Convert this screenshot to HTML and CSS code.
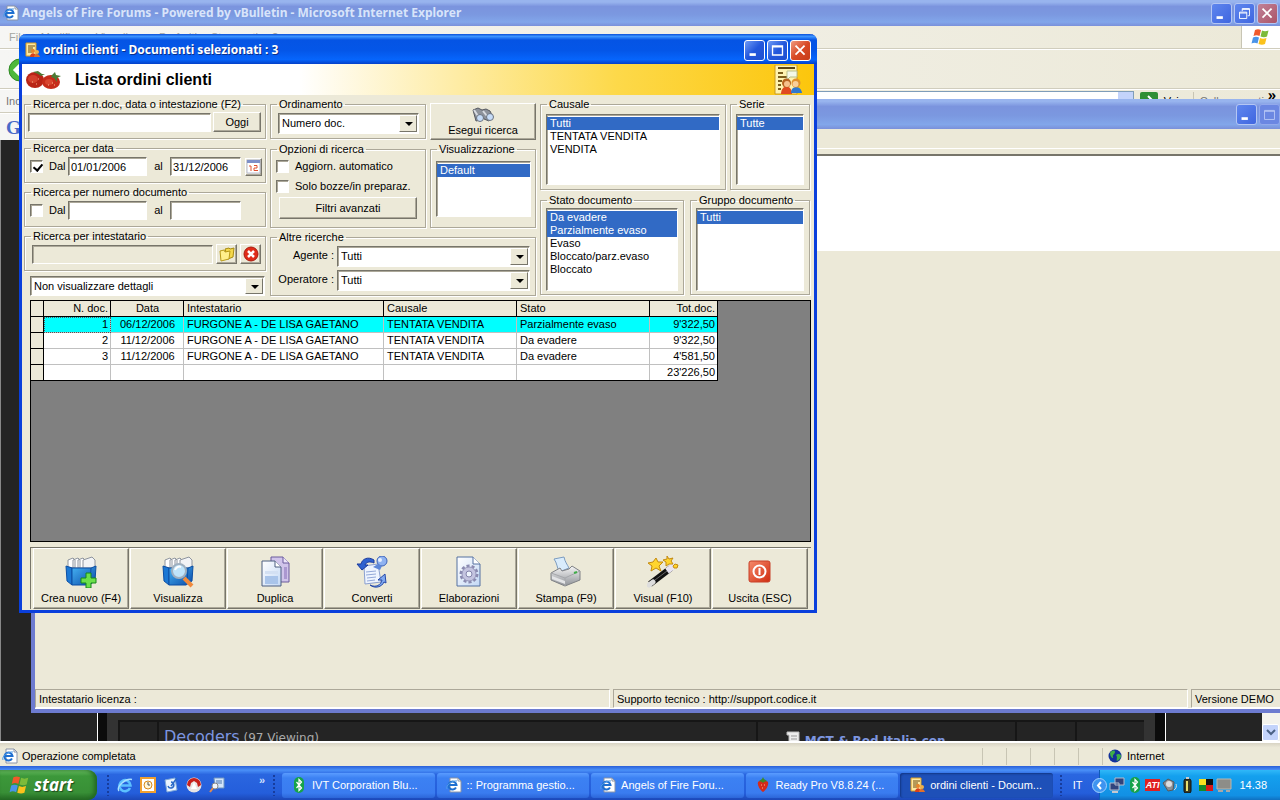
FILE: index.html
```html
<!DOCTYPE html>
<html lang="it">
<head>
  <meta charset="UTF-8" />
  <meta name="viewport" content="width=device-width, initial-scale=1.0"/>
  <title>ordini clienti</title>
  <link rel="stylesheet" href="styles.css">
</head>
<body>

<!-- shared icons -->
<svg class="sprite" aria-hidden="true">
  <defs>
    <linearGradient id="gBlue" x1="0" y1="0" x2="1" y2="1"><stop offset="0" stop-color="#46b4f4"/><stop offset="1" stop-color="#0a4aa8"/></linearGradient>
    <linearGradient id="gRed" x1="0" y1="0" x2="1" y2="1"><stop offset="0" stop-color="#f58a6a"/><stop offset="1" stop-color="#d02c10"/></linearGradient>
    <linearGradient id="gPage" x1="0" y1="0" x2="1" y2="1"><stop offset="0" stop-color="#ffffff"/><stop offset="1" stop-color="#c3d8f5"/></linearGradient>
    <linearGradient id="gGrey" x1="0" y1="0" x2="0" y2="1"><stop offset="0" stop-color="#f6f6f6"/><stop offset="1" stop-color="#8f9298"/></linearGradient>
  </defs>
  <symbol id="ie" viewBox="0 0 16 16">
    <path d="M4 1h8l3 3v11H4z" fill="#fff" stroke="#8a94a8"/>
    <path d="M12 1v3h3" fill="none" stroke="#8a94a8"/>
    <path d="M10 10.500A4 4 0 1 1 10.500 8H3" fill="none" stroke="#1f6fd0" stroke-width="2"/>
    <path d="M1 12C-1 9 6 3 11 4" fill="none" stroke="#4f9ce8"/>
  </symbol>
  <symbol id="ie-e" viewBox="0 0 16 16">
    <path d="M13 11A5.500 5.500 0 1 1 13.500 8.500H4" fill="none" stroke="#5cc0ff" stroke-width="2.600"/>
    <path d="M2 14C-1 10 8 1 15 2.500" fill="none" stroke="#a8e0ff" stroke-width="1.400"/>
  </symbol>
  <symbol id="order" viewBox="0 0 16 16">
    <path d="M2 1h10v13H2z" fill="#ffe9a0" stroke="#d69a20"/>
    <path d="M4 4h7M4 6h5M4 8h6M4 10h4" stroke="#6b4a10"/>
    <circle cx="9" cy="9" r="2" fill="#e8862a"/><path d="M6 15c0-5 6-5 6 0z" fill="#d8401c"/>
    <circle cx="13" cy="10" r="2" fill="#f0b04a"/><path d="M10 15c0-4 5-4 6 0z" fill="#e0702a"/>
  </symbol>
  <symbol id="bt" viewBox="0 0 12 16">
    <rect x="1" width="10" height="16" rx="5" fill="#16a34a"/>
    <path d="M3.500 5l5 6L6 13.500v-11L8.500 5l-5 6" fill="none" stroke="#fff" stroke-width="1.200"/>
  </symbol>
  <symbol id="berry" viewBox="0 0 16 16">
    <path d="M3 5c2-2 8-2 10 0 1 4-3 9-5 10C6 14 2 9 3 5z" fill="#d42a1a"/>
    <path d="M4 4l3-2 1-2 1 2 3 2-3 1-1 1-1-1z" fill="#3c8a2a"/>
    <path d="M6 8h1M9 8h1M7 11h1" stroke="#ffb090"/>
  </symbol>
  <symbol id="flag" viewBox="0 0 20 18">
    <path d="M4 2c2-1 4-1 6 0L8.500 8c-2-1-4-1-6 0z" fill="#f0592a"/>
    <path d="M11 2.500c2 1 4 1 6.500 0L16 8.500c-2 1-4 1-6.500 0z" fill="#7cbb3a"/>
    <path d="M2 9.500c2-1 4-1 6 0l-1.500 6c-2-1-4-1-6 0z" fill="#4a94e8"/>
    <path d="M9 10c2 1 4 1 6.500 0L14 16c-2 1-4 1-6.500 0z" fill="#fbc21c"/>
  </symbol>
  <symbol id="box" viewBox="0 0 32 32">
    <path d="M3 11V4l5-2 2 2v8zM8 12V4l5-2 2 2v8zM13 12V4l5-2 2 2v8z" fill="#fff" stroke="#8e949e"/>
    <path d="M18 12V4l9-3 3 3v8z" fill="#f2f3f5" stroke="#8e949e"/>
    <path d="M1 10l6 2v17l-5-4z" fill="#1c78d4" stroke="#0d4fa4"/>
    <path d="M7 12h19l5-2-1 15-6 4H7z" fill="url(#gBlue)" stroke="#0d4fa4"/>
    <path d="M26 12l-1 16" stroke="#0d4fa4"/>
  </symbol>
</svg>

<div class="desktop">

  <!-- browser in the background -->
  <section class="browser">
    <header class="titlebar inactive">
      <svg class="i16"><use href="#ie"/></svg>
      <span class="title-text">Angels of Fire Forums - Powered by vBulletin - Microsoft Internet Explorer</span>
      <div class="win-buttons">
        <button class="wb" aria-label="Riduci a icona"><svg viewBox="0 0 21 21"><path d="M5 15h7" stroke="#fff" stroke-width="3"/></svg></button>
        <button class="wb" aria-label="Ripristina"><svg viewBox="0 0 21 21"><path d="M5 9h8v7H5zM5 10h8M8 8V5h8v8h-2M8 6h8" fill="none" stroke="#fff"/></svg></button>
        <button class="wb close" aria-label="Chiudi"><svg viewBox="0 0 21 21"><path d="M5 5l10 10M15 5L5 15" stroke="#fff" stroke-width="2"/></svg></button>
      </div>
    </header>
    <nav class="menubar">
      <span>File</span><span>Modifica</span><span>Visualizza</span><span>Preferiti</span><span>Strumenti</span><span>?</span>
      <div class="throbber"><svg width="20" height="18"><use href="#flag"/></svg></div>
    </nav>
    <div class="toolbar">
      <svg width="24" height="24" viewBox="0 0 24 24"><circle cx="12" cy="12" r="11" fill="#4fb83c" stroke="#2f8a24"/><path d="M13 6l-6 6 6 6M7 12h11" fill="none" stroke="#fff" stroke-width="3"/></svg>
    </div>
    <div class="address">
      <label for="url">Indirizzo</label>
      <div class="combo-xp"><input id="url" type="text"><span class="chev"><svg width="10" height="6" viewBox="0 0 10 6"><path d="M1 1l4 4 4-4" fill="none" stroke="#4a6185" stroke-width="2"/></svg></span></div>
      <button class="go"><svg width="18" height="18" viewBox="0 0 18 18"><rect width="18" height="18" rx="2" fill="#2f8f35"/><path d="M3 9h9M8 4l5 5-5 5" fill="none" stroke="#fff" stroke-width="2"/></svg>Vai</button>
      <span class="links">Collegamenti</span>
      <b class="more">»</b>
    </div>
    <div class="google"><b>G</b></div>
    <main class="page">
      <div class="forum">
        <div class="forum-row">
          <div class="cell c-icon"></div>
          <div class="cell c-name"><a href="#">Decoders</a> (97 Viewing)</div>
          <div class="cell c-last">
            <svg width="15" height="14" viewBox="0 0 15 14"><path d="M1 1h12v12H3V4H1z" fill="#eee" stroke="#bbb"/><path d="M5 5h6M5 8h6" stroke="#999"/></svg>
            <a href="#">MCT &amp; Rod Italia con</a>
          </div>
          <div class="cell c-num"></div>
          <div class="cell c-mod"></div>
        </div>
      </div>
      <div class="scroll"><button aria-label="Scorri"><svg width="10" height="8" viewBox="0 0 10 8"><path d="M1 2l4 4 4-4" fill="none" stroke="#4a6185" stroke-width="2"/></svg></button></div>
    </main>
    <footer class="ie-status">
      <svg class="i16"><use href="#ie"/></svg>
      <span class="grow">Operazione completata</span>
      <i></i><i></i><i></i><i></i><i></i>
      <span class="zone"><svg width="14" height="14" viewBox="0 0 14 14"><circle cx="7" cy="7" r="6.500" fill="#12309a"/><path d="M2 4c2-3 5-3 5-1S4 6 5 8s-3 1-3-4zM8 6c2-2 5-1 5 1s-3 5-4 5 1-4-1-6z" fill="#3fae48"/></svg>Internet</span>
    </footer>
  </section>

  <!-- main application window -->
  <section class="app">
    <header class="titlebar inactive">
      <div class="win-buttons">
        <button class="wb" aria-label="Riduci a icona"><svg viewBox="0 0 21 21"><path d="M5 15h7" stroke="#fff" stroke-width="3"/></svg></button>
        <button class="wb off" aria-label="Ingrandisci"><svg viewBox="0 0 21 21"><path d="M5 6h11v10H5zM5 7h11" fill="none" stroke="#b9c8f5"/></svg></button>
      </div>
    </header>
    <div class="app-menu"></div>
    <div class="app-banner"></div>
    <div class="app-body"></div>
    <footer class="app-status">
      <span>Intestatario licenza :</span>
      <span>Supporto tecnico : http://support.codice.it</span>
      <span class="ver">Versione DEMO</span>
    </footer>
  </section>

  <!-- order list dialog -->
  <section class="dialog">
    <header class="titlebar">
      <svg class="i16"><use href="#order"/></svg>
      <span class="title-text">ordini clienti - Documenti selezionati : 3</span>
      <div class="win-buttons">
        <button class="wb" aria-label="Riduci a icona"><svg viewBox="0 0 21 21"><path d="M5 15h7" stroke="#fff" stroke-width="3"/></svg></button>
        <button class="wb" aria-label="Ingrandisci"><svg viewBox="0 0 21 21"><path d="M5 5.500h11v10H5zM5 6.500h11" fill="none" stroke="#fff" stroke-width="1.500"/></svg></button>
        <button class="wb close" aria-label="Chiudi"><svg viewBox="0 0 21 21"><path d="M5 5l10 10M15 5L5 15" stroke="#fff" stroke-width="2"/></svg></button>
      </div>
    </header>

    <div class="banner">
      <svg width="38" height="20" viewBox="0 0 38 20">
        <ellipse cx="10" cy="10" rx="9" ry="8" fill="#b82416"/><ellipse cx="26" cy="12" rx="9" ry="7" fill="#c62c1a"/>
        <ellipse cx="8" cy="9" rx="5" ry="4" fill="#d2402c"/><ellipse cx="24" cy="12" rx="4" ry="3" fill="#d8452f"/>
        <path d="M8 2l5-1 4 3 3 0-4 2-3-2z" fill="#4d7a35"/><path d="M27 5l3-3 1 3 5 1-4 2 0 4-3-4-3-1z" fill="#4d7a35"/>
        <path d="M7 12h1M11 14h1M13 9h1M23 15h1M27 13h1M29 15h1" stroke="#f5b58a"/>
      </svg>
      <h1>Lista ordini clienti</h1>
      <svg width="30" height="30" viewBox="0 0 30 30">
        <path d="M1 0h22v29H1z" fill="#fff3b0" stroke="#c99a20"/>
        <path d="M4 3h17" stroke="#5c4510" stroke-width="2"/><path d="M4 8h5M4 12h9M4 16h4M4 20h3M4 24h3" stroke="#7c5e1c" stroke-width="2"/>
        <path d="M13 6h10v6h-7l-3 3z" fill="#f4f8e8" stroke="#b9bf8a"/>
        <path d="M7 29c0-10 11-10 11 0z" fill="#e04a20"/><circle cx="12.500" cy="18" r="4.500" fill="#b86320"/><circle cx="13" cy="19" r="3" fill="#f6c08c"/>
        <path d="M17 28c0-8 10-8 11 0z" fill="#2f78d0"/><circle cx="22" cy="18" r="4.500" fill="#e0912c"/><circle cx="21.500" cy="19" r="3" fill="#f9cf9a"/>
      </svg>
    </div>

    <form class="filters" onsubmit="return false">
      <div class="col-left">
        <fieldset>
          <legend>Ricerca per n.doc, data o intestazione (F2)</legend>
          <div class="line"><input class="field grow" type="text" aria-label="Ricerca"><button class="btn today">Oggi</button></div>
        </fieldset>
        <fieldset>
          <legend>Ricerca per data</legend>
          <div class="line dates">
            <label class="tick"><input type="checkbox" checked> Dal</label>
            <input class="field w-from" type="text" value="01/01/2006" aria-label="Dal">
            <span class="al">al</span>
            <input class="field w-to" type="text" value="31/12/2006" aria-label="Al">
            <button class="btn square" aria-label="Calendario"><svg width="15" height="15" viewBox="0 0 15 15"><path d="M1 1h13v13H1z" fill="#fff" stroke="#b8bcd0"/><path d="M1 1h13v3H1z" fill="#7d8fc8"/><path d="M3 7h2v5M8 6.500h3v2.500H8v2.500h4" fill="none" stroke="#e05030"/></svg></button>
          </div>
        </fieldset>
        <fieldset>
          <legend>Ricerca per numero documento</legend>
          <div class="line dates">
            <label class="tick"><input type="checkbox"> Dal</label>
            <input class="field w-from" type="text" aria-label="Dal numero">
            <span class="al">al</span>
            <input class="field w-to" type="text" aria-label="Al numero">
          </div>
        </fieldset>
        <fieldset>
          <legend>Ricerca per intestatario</legend>
          <div class="line holder">
            <input class="field grow" type="text" disabled aria-label="Intestatario">
            <button class="btn small" aria-label="Apri"><svg width="16" height="16" viewBox="0 0 16 16"><path d="M6 3l4-1 1 1 4-1-1 9-5 2z" fill="#f4d84a" stroke="#a88a10"/><path d="M1 5l4-1 1 2 5-1-1 8-8 2z" fill="#fff08c" stroke="#b89a18"/></svg></button>
            <button class="btn small" aria-label="Cancella"><svg width="16" height="16" viewBox="0 0 16 16"><circle cx="8" cy="8" r="7" fill="#e02c18" stroke="#a81c10"/><path d="M5 5l6 6M11 5l-6 6" stroke="#fff" stroke-width="2.500"/></svg></button>
          </div>
        </fieldset>
        <div class="combo details"><select aria-label="Dettagli"><option>Non visualizzare dettagli</option></select></div>
      </div>

      <div class="col-mid">
        <div class="mid-top">
          <fieldset class="order">
            <legend>Ordinamento</legend>
            <div class="combo"><select aria-label="Ordinamento"><option>Numero doc.</option></select></div>
          </fieldset>
          <button class="btn search">
            <svg width="24" height="16" viewBox="0 0 24 16"><path d="M2 3l5-2 4 2 4-1 4 2 3 6-4 4-5-2-2-4-2 5-4 1z" fill="#8d929b" stroke="#55585f"/><path d="M3 3l4 6M12 4l4 5" stroke="#d9dce2" stroke-width="2"/><circle cx="9" cy="11" r="3.500" fill="#c6dcf8" stroke="#6c7480"/><circle cx="19" cy="10" r="3.500" fill="#c6dcf8" stroke="#6c7480"/></svg>
            Esegui ricerca
          </button>
        </div>
        <div class="mid-row">
          <fieldset class="options">
            <legend>Opzioni di ricerca</legend>
            <label class="tick"><input type="checkbox"> Aggiorn. automatico</label>
            <label class="tick"><input type="checkbox"> Solo bozze/in preparaz.</label>
            <button class="btn adv">Filtri avanzati</button>
          </fieldset>
          <fieldset class="view">
            <legend>Visualizzazione</legend>
            <select class="list" multiple aria-label="Visualizzazione"><option selected>Default</option></select>
          </fieldset>
        </div>
        <fieldset class="others">
          <legend>Altre ricerche</legend>
          <div class="pair"><label for="agente">Agente :</label><div class="combo"><select id="agente"><option>Tutti</option></select></div></div>
          <div class="pair"><label for="operatore">Operatore :</label><div class="combo"><select id="operatore"><option>Tutti</option></select></div></div>
        </fieldset>
      </div>

      <div class="col-right">
        <div class="right-row upper">
          <fieldset class="causale">
            <legend>Causale</legend>
            <select class="list" multiple aria-label="Causale"><option selected>Tutti</option><option>TENTATA VENDITA</option><option>VENDITA</option></select>
          </fieldset>
          <fieldset class="serie">
            <legend>Serie</legend>
            <select class="list" multiple aria-label="Serie"><option selected>Tutte</option></select>
          </fieldset>
        </div>
        <div class="right-row lower">
          <fieldset class="stato">
            <legend>Stato documento</legend>
            <select class="list" multiple aria-label="Stato documento"><option selected>Da evadere</option><option selected>Parzialmente evaso</option><option>Evaso</option><option>Bloccato/parz.evaso</option><option>Bloccato</option></select>
          </fieldset>
          <fieldset class="gruppo">
            <legend>Gruppo documento</legend>
            <select class="list" multiple aria-label="Gruppo documento"><option selected>Tutti</option></select>
          </fieldset>
        </div>
      </div>
    </form>

    <div class="grid">
      <table>
        <colgroup><col class="k-sel"><col class="k-num"><col class="k-date"><col class="k-name"><col class="k-text"><col class="k-text"><col class="k-num"></colgroup>
        <thead>
          <tr><th></th><th class="r">N. doc.</th><th class="c">Data</th><th>Intestatario</th><th>Causale</th><th>Stato</th><th class="r">Tot.doc.</th></tr>
        </thead>
        <tbody>
          <tr class="current"><th></th><td class="r focus">1</td><td class="c">06/12/2006</td><td>FURGONE A - DE LISA GAETANO</td><td>TENTATA VENDITA</td><td>Parzialmente evaso</td><td class="r">9'322,50</td></tr>
          <tr><th></th><td class="r">2</td><td class="c">11/12/2006</td><td>FURGONE A - DE LISA GAETANO</td><td>TENTATA VENDITA</td><td>Da evadere</td><td class="r">9'322,50</td></tr>
          <tr><th></th><td class="r">3</td><td class="c">11/12/2006</td><td>FURGONE A - DE LISA GAETANO</td><td>TENTATA VENDITA</td><td>Da evadere</td><td class="r">4'581,50</td></tr>
          <tr><th></th><td></td><td></td><td></td><td></td><td></td><td class="r">23'226,50</td></tr>
        </tbody>
      </table>
    </div>

    <div class="actions">
      <button class="btn"><svg viewBox="0 0 32 32"><use href="#box"/><path d="M21 17h5v5h5v5h-5v5h-5v-5h-5v-5h5z" fill="#6be04a" stroke="#17861a"/></svg>Crea nuovo (F4)</button>
      <button class="btn"><svg viewBox="0 0 32 32"><use href="#box"/><path d="M22 22l8 8" stroke="#f08a3c" stroke-width="4"/><circle cx="17" cy="15" r="7" fill="#bfe4fa" stroke="#9fb0c0" stroke-width="2"/><path d="M13 14c1-3 4-4 6-3" fill="none" stroke="#fff" stroke-width="2"/></svg>Visualizza</button>
      <button class="btn"><svg viewBox="0 0 32 32"><path d="M12 1h12l6 6v19H12z" fill="#d0c4ea" stroke="#6b5a9c"/><path d="M24 1v6h6" fill="#eee6fa" stroke="#6b5a9c"/><path d="M25 11h3v12h-3z" fill="#ab98d0"/><path d="M3 5h13l6 6v19H3z" fill="url(#gPage)" stroke="#4d5e80"/><path d="M16 5v6h6" fill="#fff" stroke="#4d5e80"/><path d="M6 15h13v3H6z" fill="#d3e0f3"/><path d="M6 20h13v8H6z" fill="#a9c4ea"/></svg>Duplica</button>
      <button class="btn"><svg viewBox="0 0 32 32"><path d="M8 10l14-2 3 18-16 2z" fill="#eef4ff" stroke="#8a9fd0"/><path d="M10 16l10-1M10 19l10-1M11 22l9-1M11 25l8-1" stroke="#93a8d8"/><path d="M18 4C12 0 6 3 5 8H1l5 6 6-5H9c1-3 5-4 9-2z" fill="#2f62d0" stroke="#1b3a9c"/><path d="M14 29c6 3 11 0 12-5h-4l7-6 1 9-2-1c-2 5-9 7-14 3z" fill="#7fa8f0" stroke="#2448a8"/><circle cx="26" cy="5" r="5" fill="#8fb2f0" stroke="#3c62b8"/><circle cx="24" cy="4" r="2" fill="#e6efff"/><path d="M22 8l-5 3 7 3 2-4z" fill="#5d87d8"/></svg>Converti</button>
      <button class="btn"><svg viewBox="0 0 32 32"><path d="M4 1h16l7 7v22H4z" fill="url(#gPage)" stroke="#5470a0"/><path d="M20 1v7h7" fill="#fff" stroke="#5470a0"/><circle cx="16" cy="18" r="8" fill="none" stroke="#8a8ab0" stroke-width="3" stroke-dasharray="3 2"/><circle cx="16" cy="18" r="7" fill="#c4c4e0" stroke="#9696ba"/><circle cx="16" cy="18" r="3" fill="#eef3fc" stroke="#8484aa"/></svg>Elaborazioni</button>
      <button class="btn"><svg viewBox="0 0 32 32"><path d="M4 3l10-2c1 5 3 7 5 11L9 16C7 11 7 7 4 3z" fill="#d9ecfc" stroke="#7c9cc0"/><path d="M1 17l9-5 2 3 7-2 3-3 8 5v9l-15 6-14-6z" fill="url(#gGrey)" stroke="#808286"/><path d="M1 17l14 5 15-7M15 22v8" fill="none" stroke="#a5a7ab"/><path d="M2 20l13 5v3L2 23z" fill="#e3e4e6"/><path d="M24 17l3-1" stroke="#3fae48" stroke-width="2"/></svg>Stampa (F9)</button>
      <button class="btn"><svg viewBox="0 0 32 32"><path d="M3 28L24 12" stroke="#111" stroke-width="6"/><path d="M20 15l8-6" stroke="#e8e4f0" stroke-width="6"/><path d="M2 29l4-3" stroke="#ddd" stroke-width="5" stroke-linecap="round"/><path d="M8 24l12-9" stroke="#666"/><path d="M9 2l2 4 5 0-4 4 2 5-5-3-5 3 1-5-4-3 5-1zM20 0l2 3 4-1-2 3 2 3-4 0-3 2 0-4-3-2 4-1zM28 8l3 1-1 3-3 0-1-2z" fill="#ffd52e" stroke="#c48a10"/></svg>Visual (F10)</button>
      <button class="btn"><svg viewBox="0 0 32 32"><rect x="5" y="5" width="21" height="21" rx="2" fill="url(#gRed)" stroke="#c84028"/><circle cx="15.500" cy="15.500" r="6" fill="none" stroke="#fff" stroke-width="2"/><path d="M15.500 12v7" stroke="#fff" stroke-width="2"/></svg>Uscita (ESC)</button>
    </div>
  </section>

  <!-- taskbar -->
  <footer class="taskbar">
    <button class="start"><svg width="22" height="22" viewBox="0 0 20 18"><use href="#flag"/></svg>start</button>
    <div class="quick">
      <span class="grip"></span>
      <svg class="i16"><use href="#ie-e"/></svg>
      <svg class="i16" viewBox="0 0 16 16"><rect x="1" y="1" width="14" height="14" fill="#fff" stroke="#f0a030" stroke-width="2"/><circle cx="8" cy="8" r="4" fill="#fff6d8" stroke="#d88a1c"/><path d="M8 5v3h2" fill="none" stroke="#555"/></svg>
      <svg class="i16" viewBox="0 0 16 16"><path d="M2 3l10-2 2 12-10 2z" fill="#eaf4ff" stroke="#7fa8d8"/><path d="M5 9a3 3 0 1 0 3-4M8 9l6-8" fill="none" stroke="#2a6ac8" stroke-width="1.500"/></svg>
      <svg class="i16" viewBox="0 0 16 16"><circle cx="8" cy="8" r="7.500" fill="#e8e4e4"/><path d="M1 8a7 7 0 0 1 14 0l-3 2-1-4-3-2-3 2-1 4z" fill="#c8201c"/><path d="M8 5l3 7H5z" fill="#fff"/></svg>
      <svg class="i16" viewBox="0 0 16 16"><path d="M5 1h10v10H6z" fill="#d4e6fa" stroke="#6f94c0"/><path d="M7 4h6M7 6h6" stroke="#4f78b0"/><circle cx="6" cy="9" r="3" fill="#f2f6fa" stroke="#888"/><path d="M4 11l-3 4" stroke="#e08a50" stroke-width="2"/></svg>
      <b>»</b>
    </div>
    <div class="tasks">
      <span class="grip"></span>
      <button class="task"><svg class="i16"><use href="#bt"/></svg><span>IVT Corporation Blu...</span></button>
      <button class="task"><svg class="i16"><use href="#ie"/></svg><span>:: Programma gestio...</span></button>
      <button class="task"><svg class="i16"><use href="#ie"/></svg><span>Angels of Fire Foru...</span></button>
      <button class="task"><svg class="i16"><use href="#berry"/></svg><span>Ready Pro V8.8.24 (...</span></button>
      <button class="task active"><svg class="i16"><use href="#order"/></svg><span>ordini clienti - Docum...</span></button>
    </div>
    <div class="lang"><span class="grip"></span>IT</div>
    <div class="tray">
      <button class="expand" aria-label="Mostra icone"><svg width="15" height="15" viewBox="0 0 15 15"><circle cx="7.500" cy="7.500" r="7" fill="#3f94f0" stroke="#9fd0ff"/><path d="M9 4L6 7.500 9 11" fill="none" stroke="#fff" stroke-width="2"/></svg></button>
      <svg class="i16" viewBox="0 0 16 16"><path d="M6 1h9v7H6zM1 6h9v7H1z" fill="#31437c" stroke="#b4bccc"/><path d="M3 15h6" stroke="#c4c8d0" stroke-width="2"/></svg>
      <svg class="i16"><use href="#bt"/></svg>
      <b class="ati">ATI</b>
      <svg class="i16" viewBox="0 0 16 16"><path d="M1 6l5-4 6 3-1 8-5 1z" fill="#8c8f94" stroke="#55585c"/><circle cx="7" cy="7" r="3" fill="#dcdde0"/><path d="M12 13c2-1 3-4 2-6" fill="none" stroke="#ddd"/></svg>
      <svg class="i16" viewBox="0 0 16 16"><rect x="4" y="2" width="7" height="14" rx="2" fill="#3a3a22" stroke="#111"/><path d="M7 4v10" stroke="#e8e070" stroke-width="2"/><path d="M6 1h3" stroke="#ccc" stroke-width="2"/></svg>
      <svg class="i16" viewBox="0 0 16 16"><path d="M1 2h7v6H1z" fill="#f8e020"/><path d="M8 2h7v6H8z" fill="#111"/><path d="M1 8h7v6H1z" fill="#158a2a"/><path d="M8 8h7v6H8z" fill="#d81818"/></svg>
      <svg class="i16" viewBox="0 0 16 16"><path d="M1 2h14v10H1z" fill="#8d8d88" stroke="#b8b8b0"/><path d="M2 14h5M10 14h4" stroke="#a8a8a8" stroke-width="2"/></svg>
      <time>14.38</time>
    </div>
  </footer>
</div>

</body>
</html>
```
FILE: styles.css
```css
* {
  box-sizing: border-box;
}
body {
  margin: 0;
  font-family: "Liberation Sans", Arial, sans-serif;
  font-size: 11px;
  line-height: 13px;
  color: #000;
}
button, input, select {
  font: inherit;
  color: inherit;
  margin: 0;
}
button {
  padding: 0;
  border: none;
  background: none;
}
.sprite {
  position: absolute;
  width: 0;
  height: 0;
}
.i16 {
  width: 16px;
  height: 16px;
  flex: none;
}
.grow { flex: 1; min-width: 0; }

.desktop {
  position: relative;
  display: flex;
  flex-direction: column;
  height: 100vh;
  overflow: hidden;
}

/* title bars */
.titlebar {
  display: flex;
  align-items: center;
  gap: 3px;
  height: 30px;
  padding: 0 6px 0 5px;
  background: linear-gradient(#0a4fd8 0%, #3d95ff 8%, #0554e4 20%, #0456e8 55%, #0665fc 85%, #0440c8 100%);
}
.titlebar.inactive {
  background: linear-gradient(#98b4ee 0%, #98b4ee 8%, #7b94de 25%, #7b98e0 55%, #82a6ea 85%, #7a90da 100%);
}
.title-text {
  font-family: "Noto Sans", "Open Sans", sans-serif;
  font-weight: bold;
  font-size: 12px;
  line-height: 16px;
  color: #fff;
  text-shadow: 1px 1px 0 #0a2f8c;
  white-space: nowrap;
}
.inactive .title-text {
  color: #d8e4fa;
  text-shadow: none;
}
.win-buttons {
  display: flex;
  gap: 2px;
  margin-left: auto;
}
.wb {
  width: 21px;
  height: 21px;
  border: 1px solid #fff;
  border-radius: 3px;
  background: linear-gradient(135deg, #6f9bf5, #2257dc 50%, #1f50d0);
}
.wb svg {
  display: block;
  width: 19px;
  height: 19px;
}
.wb.close {
  background: linear-gradient(135deg, #f09a80, #d84a25 50%, #c83c18);
}
.inactive .wb {
  border-color: #b4c6f4;
  background: linear-gradient(135deg, #5f86ee, #3f66e0);
}
.inactive .wb.close {
  background: linear-gradient(135deg, #c08298, #ac5468);
}
.inactive .wb.off {
  border-color: #93a9ec;
  background: #6b87e2;
}

/* browser */
.browser {
  flex: 1;
  display: flex;
  flex-direction: column;
  min-height: 0;
  background: linear-gradient(90deg, #f6f6f4, #ece9d8);
}
.browser > .titlebar {
  height: 26px;
  padding: 0 2px 0 3px;
}
.menubar {
  display: flex;
  align-items: center;
  gap: 14px;
  height: 23px;
  padding-left: 9px;
  color: #a5a5a0;
  border-bottom: 1px solid #d0cdbd;
}
.throbber {
  display: flex;
  align-items: center;
  justify-content: center;
  width: 39px;
  height: 22px;
  margin-left: auto;
  background: #fff;
  border-left: 1px solid #c8c5b4;
}
.toolbar {
  height: 40px;
  padding: 8px;
  border-top: 1px solid #fff;
  border-bottom: 1px solid #d0cdbd;
}
.address {
  display: flex;
  align-items: center;
  gap: 6px;
  height: 24px;
  padding: 0 4px 0 6px;
  border-top: 1px solid #fff;
  border-bottom: 1px solid #d0cdbd;
  color: #777;
}
.combo-xp {
  display: flex;
  flex: 1;
  height: 20px;
  background: #fff;
  border: 1px solid #7f9db9;
}
.combo-xp input {
  flex: 1;
  border: none;
  background: none;
}
.chev {
  width: 15px;
  padding: 5px 2px;
  background: #c3d3fb;
}
.go {
  display: flex;
  align-items: center;
  gap: 6px;
  width: 54px;
  color: #000;
  border-right: 1px solid #c8c5b4;
}
.links {
  width: 62px;
  white-space: nowrap;
}
.more {
  align-self: flex-start;
  color: #000;
  font-size: 15px;
  line-height: 10px;
}
.google {
  height: 27px;
  padding: 4px 6px;
  border-top: 1px solid #fff;
  font-family: "Liberation Serif", serif;
  font-size: 19px;
  line-height: 19px;
  color: #4a6ac8;
}
.page {
  flex: 1;
  display: flex;
  min-height: 0;
  padding-left: 96px;
  background: #242424;
  border-left: 1px solid #888;
  overflow: hidden;
}
.forum {
  flex: 1;
  display: flex;
  align-items: flex-end;
  margin-right: 96px;
  padding: 0 10px 0 9px;
  border: solid #fff;
  border-width: 0 1px;
  background: #0c0c0c;
}
.forum-row {
  flex: 1;
  display: flex;
  height: 30px;
  padding: 9px 11px 0;
  background: #333;
}
.cell {
  height: 21px;
  padding: 9px 0 0 5px;
  background: #242424;
  border: solid #161616;
  border-width: 2px 0 0 2px;
  font-family: "DejaVu Sans", Verdana, sans-serif;
  font-size: 12px;
  line-height: 16px;
  color: #aaa;
  white-space: nowrap;
}
.cell a {
  font-size: 16px;
  color: #7d96e0;
  text-decoration: none;
}
.c-icon { width: 39px; }
.c-name { flex: 1; padding-top: 7px; }
.c-last { width: 259px; padding-left: 28px; }
.c-last a { font-size: 12px; font-weight: bold; }
.c-num { width: 60px; }
.c-mod { width: 69px; }
.scroll {
  display: flex;
  align-items: flex-end;
  width: 18px;
  background: #f3f2ec;
}
.scroll button {
  width: 17px;
  height: 17px;
  background: #c3d3fb;
  border: 1px solid #fff;
  border-radius: 2px;
}
.ie-status {
  position: relative;
  display: flex;
  align-items: center;
  gap: 4px;
  height: 25px;
  padding: 3px 2px 0;
  border-top: 2px solid #fff;
  background: linear-gradient(#d8d4c4, #ece9d8 20%, #ece9d8);
}
.ie-status i {
  width: 20px;
  height: 17px;
  border-left: 1px solid #c8c5b4;
}
.zone {
  display: flex;
  align-items: center;
  gap: 5px;
  width: 176px;
  height: 17px;
  padding-left: 5px;
  border-left: 1px solid #c8c5b4;
}

/* main application window, partly off screen */
.app {
  position: absolute;
  left: 31px;
  right: -1px;
  top: 99px;
  bottom: 87px;
  display: flex;
  flex-direction: column;
  background: #ece9d8;
  border: solid #6d7bd0;
  border-width: 0 0 4px 4px;
}
.app > .titlebar { padding-right: 1px; }
.app-menu {
  height: 27px;
  border-bottom: 2px solid #77756a;
  box-shadow: inset 0 -5px 0 #ece9d8, inset 0 -6px 0 #fff;
}
.app-banner {
  height: 95px;
  background: #fff;
}
.app-body { flex: 1; }
.app-status {
  display: flex;
  gap: 3px;
  height: 20px;
  border-bottom: 1px solid #fff;
}
.app-status span {
  flex: 1;
  padding: 3px;
  border: 1px solid;
  border-color: #aca899 #fff #fff #aca899;
}
.app-status .ver { flex: 0 0 90px; }

/* dialog */
.dialog {
  position: absolute;
  left: 19px;
  top: 34px;
  width: 798px;
  background: #ece9d8;
  border: solid #0a3fdc;
  border-width: 0 3px 3px;
  border-radius: 7px 7px 0 0;
}
.dialog > .titlebar {
  margin: 0 -3px;
  padding-top: 2px;
  border-radius: 7px 7px 0 0;
}
.banner {
  display: flex;
  align-items: center;
  gap: 12px;
  height: 31px;
  padding: 0 10px 0 3px;
  background: linear-gradient(90deg, #fff 35%, #fdd94a 75%, #fcc60c);
}
.banner h1 {
  flex: 1;
  margin: 0;
  font-size: 16px;
  line-height: 20px;
}
.filters {
  display: flex;
  gap: 4px;
  padding: 3px 4px 4px 2px;
}
fieldset {
  min-width: 0;
  margin: 0;
  padding: 0;
  border: 1px solid #aca899;
  box-shadow: 1px 1px 0 #fff, inset 1px 1px 0 #fff;
}
legend {
  margin-left: 6px;
  padding: 0 2px;
  line-height: 13px;
}
.field {
  height: 19px;
  padding: 0 2px;
  background: #fff;
  border: 1px solid;
  border-color: #77756a #fff #fff #77756a;
  box-shadow: inset 1px 1px 0 #aca899;
}
.field:disabled { background: #ece9d8; }
.btn {
  background: #ece9d8;
  border: 1px solid;
  border-color: #fff #77756a #77756a #fff;
  box-shadow: inset -1px -1px 0 #aca899;
}
.line {
  display: flex;
  align-items: center;
  padding: 1px 4px 0 3px;
}
.today {
  width: 48px;
  height: 20px;
  margin-left: 2px;
}
.col-left {
  display: flex;
  flex-direction: column;
  gap: 3px;
  width: 242px;
}
.col-left fieldset { height: 41px; }
.dates { padding: 2px 3px 0 5px; }
.tick {
  display: flex;
  align-items: center;
  gap: 6px;
  white-space: nowrap;
}
.tick input {
  appearance: none;
  width: 13px;
  height: 13px;
  background: #fff;
  border: 1px solid;
  border-color: #77756a #fff #fff #77756a;
  box-shadow: inset 1px 1px 0 #aca899;
}
.tick input:checked::before {
  content: "";
  display: block;
  width: 4px;
  height: 7px;
  margin: 1px 0 0 4px;
  border: solid #000;
  border-width: 0 2px 2px 0;
  transform: rotate(40deg);
}
.dates .tick { width: 38px; }
.w-from { width: 79px; }
.w-to { width: 71px; }
.al {
  width: 23px;
  text-align: center;
}
.square {
  display: grid;
  place-items: center;
  width: 17px;
  height: 18px;
  margin-left: 4px;
}
.holder { padding-left: 7px; gap: 3px; }
.small {
  display: grid;
  place-items: center;
  width: 21px;
  height: 20px;
}

/* drop-down with raised arrow button */
.combo {
  position: relative;
  height: 21px;
}
.combo select {
  appearance: none;
  width: 100%;
  height: 100%;
  padding: 0 20px 0 3px;
  background: #fff;
  border: 1px solid;
  border-color: #77756a #fff #fff #77756a;
  border-radius: 0;
  box-shadow: inset 1px 1px 0 #aca899;
}
.combo::before {
  content: "";
  position: absolute;
  right: 2px;
  top: 2px;
  bottom: 2px;
  width: 16px;
  background: #ece9d8;
  border: 1px solid;
  border-color: #fff #77756a #77756a #fff;
  pointer-events: none;
}
.combo::after {
  content: "";
  position: absolute;
  right: 6px;
  top: 9px;
  border: 4px solid transparent;
  border-top-color: #000;
  border-bottom: none;
  pointer-events: none;
}
.details {
  height: 20px;
  margin: 2px 1px 0 6px;
}

.col-mid {
  display: flex;
  flex-direction: column;
  gap: 3px;
  width: 266px;
}
.mid-top, .mid-row {
  display: flex;
  gap: 4px;
}
.order {
  width: 156px;
  height: 41px;
}
.order .combo { margin: 2px 6px 0 7px; }
.search {
  display: flex;
  flex-direction: column;
  align-items: center;
  justify-content: center;
  gap: 1px;
  flex: 1;
  height: 37px;
  margin-top: 5px;
}
.options {
  display: flex;
  flex-direction: column;
  width: 156px;
  height: 85px;
}
.options .tick {
  height: 20px;
  padding-left: 5px;
}
.adv {
  width: 138px;
  height: 22px;
  margin: 1px 0 0 8px;
}
.view {
  flex: 1;
  height: 85px;
}
.list {
  display: block;
  width: 100%;
  height: 100%;
  padding: 2px 0 0;
  overflow: hidden;
  background: #fff;
  border: 1px solid;
  border-color: #77756a #fff #fff #77756a;
  border-radius: 0;
  box-shadow: inset 1px 1px 0 #aca899;
}
.list option {
  min-height: 13px;
  padding: 0 3px;
  font-size: 11px;
  line-height: 13px;
}
.list option:checked {
  background: linear-gradient(#316ac5, #316ac5);
  color: #fff;
  -webkit-text-fill-color: #fff;
}
.view .list {
  width: 95px;
  height: 56px;
  margin: 5px;
}
.others {
  height: 65px;
}
.pair {
  display: flex;
  gap: 3px;
  padding-right: 5px;
  margin: 2px 0 3px;
}
.pair label {
  width: 63px;
  padding-top: 3px;
  text-align: right;
}
.pair .combo { flex: 1; }

.col-right {
  display: flex;
  flex-direction: column;
  gap: 4px;
  flex: 1;
  min-width: 0;
}
.right-row {
  display: flex;
  gap: 4px;
}
.right-row legend { margin-left: 1px; }
.upper fieldset { height: 92px; }
.upper .list { height: 71px; }
.lower fieldset { height: 101px; }
.lower .list { height: 83px; }
.right-row fieldset {
  padding: 3px 5px 0;
}
.right-row.lower fieldset { padding-top: 1px; }
.lower { gap: 6px; }
.causale { flex: 1; }
.serie { width: 80px; }
.stato { flex: 1; }
.gruppo { width: 120px; }

/* documents grid */
.grid {
  height: 242px;
  margin: 0 3px 0 8px;
  background: #808080;
  border: 1px solid #000;
}
table {
  table-layout: fixed;
  width: 686px;
  border-spacing: 0;
  background: #fff;
  border-right: 1px solid #000;
  border-bottom: 1px solid #000;
}
.k-sel { width: 13px; }
.k-num { width: 67px; }
.k-date { width: 73px; }
.k-name { width: 200px; }
.k-text { width: 133px; }
th, td {
  height: 16px;
  padding: 0 2px 0 3px;
  font-weight: normal;
  text-align: left;
  line-height: 15px;
  white-space: nowrap;
  border-right: 1px solid #c0c0c0;
  border-bottom: 1px solid #c0c0c0;
}
th {
  background: #ece9d8;
  border-color: #000;
}
tr > :last-child { border-right: none; }
tbody tr:last-child > * {
  height: 15px;
  border-bottom: none;
}
.r { text-align: right; }
.c { text-align: center; }
.current td { background: #0ff; }
.focus { outline: 1px dotted #555; outline-offset: -1px; }

.actions {
  display: flex;
  gap: 1px;
  margin: 5px 3px 1px 8px;
  padding: 0 3px 0 2px;
  border: solid #77756a;
  border-width: 1px 0 0 1px;
}
.actions .btn {
  display: flex;
  flex-direction: column;
  align-items: center;
  gap: 4px;
  flex: 1;
  height: 61px;
  padding-top: 7px;
}
.actions svg {
  width: 32px;
  height: 32px;
}

/* taskbar */
.taskbar {
  display: flex;
  align-items: stretch;
  height: 34px;
  padding-top: 4px;
  background: linear-gradient(#2a5fd8 0%, #4a90f8 12%, #2a66e0 25%, #245edb 80%, #1c48b8 100%);
  color: #fff;
}
.start {
  display: flex;
  align-items: center;
  gap: 3px;
  width: 97px;
  padding-left: 9px;
  border-radius: 0 9px 9px 0;
  background: linear-gradient(#6cc064 0%, #3c983a 20%, #388f36 75%, #246a24 100%);
  box-shadow: inset -3px 0 4px #226822;
  font-family: "Open Sans", "Noto Sans", sans-serif;
  font-size: 17px;
  font-weight: bold;
  font-style: italic;
  line-height: 20px;
  text-shadow: 1px 1px 1px #1c4a1c;
}
.grip {
  width: 4px;
  height: 22px;
  background: radial-gradient(circle, #173c9c 1px, transparent 1px) 0 0 / 4px 4px;
}
.quick {
  display: flex;
  align-items: center;
  gap: 7px;
  width: 175px;
  padding-left: 9px;
}
.quick b {
  margin: 0 7px 10px auto;
  color: #cfe0ff;
}
.tasks {
  flex: 1;
  display: flex;
  align-items: center;
  gap: 2px;
  min-width: 0;
}
.tasks .grip { margin-right: 4px; }
.task {
  display: flex;
  align-items: center;
  gap: 5px;
  flex: 1;
  min-width: 0;
  height: 25px;
  padding-left: 9px;
  border-radius: 3px;
  background: linear-gradient(#5a9cff, #3c81f3 20%, #3a7cf0 80%, #2c66d8);
  white-space: nowrap;
}
.task.active {
  background: #1e50b8;
  box-shadow: inset 1px 1px 2px #123684;
}
.lang {
  display: flex;
  align-items: center;
  gap: 10px;
  width: 46px;
  padding-left: 6px;
}
.tray {
  display: flex;
  align-items: center;
  gap: 2px;
  padding-right: 13px;
  background: linear-gradient(#30b8f8, #14a0ee 20%, #1290e4 85%, #1070c0);
  border-left: 1px solid #0c5cb8;
}
.expand {
  height: 15px;
  margin-left: -8px;
}
.ati {
  padding: 0 1px;
  background: #e02020;
  font-style: italic;
  font-size: 9px;
  line-height: 12px;
}
.tray time { margin-left: 5px; }
```
